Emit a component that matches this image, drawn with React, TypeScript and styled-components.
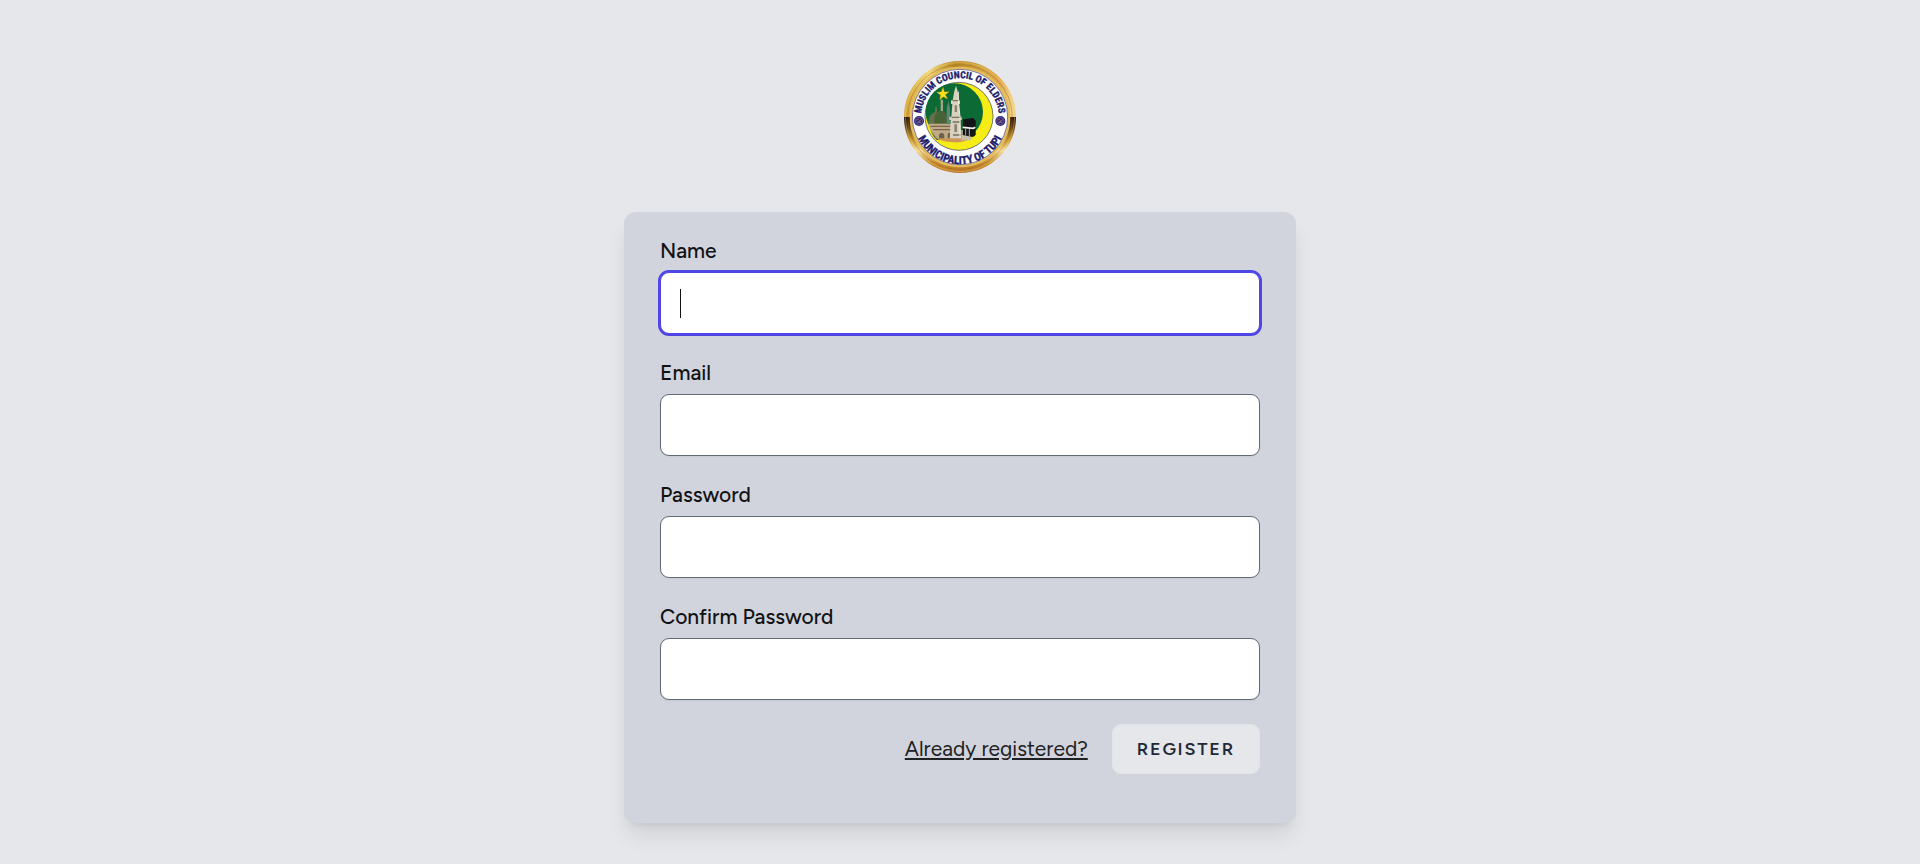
import React from "react";
import styled, { createGlobalStyle } from "styled-components";

const GlobalStyle = createGlobalStyle`
  *, *::before, *::after { box-sizing: border-box; }
  body {
    margin: 0;
    background: #e5e7eb;
    color: #111214;
    font-family: Figtree, Lato, "Liberation Sans", sans-serif;
    font-size: 21px;
    line-height: 30px;
  }
`;

const Page = styled.main`
  min-height: 100vh;
  display: flex;
  flex-direction: column;
  align-items: center;
  gap: 39px;
  padding: 61px 24px 40px;
`;

const HomeLink = styled.a`
  display: block;
  line-height: 0;
`;

const Seal = styled.svg`
  width: 112px;
  height: 112px;
`;

const Card = styled.form`
  width: 100%;
  max-width: 672px;
  display: flex;
  flex-direction: column;
  gap: 24px;
  padding: 24px 36px 49px;
  background: #d1d4dc;
  border-radius: 12px;
  box-shadow: 0 15px 22px -4px rgba(0, 0, 0, 0.1), 0 6px 9px -6px rgba(0, 0, 0, 0.1);
`;

const Field = styled.div`
  display: flex;
  flex-direction: column;
  gap: 6px;
`;

const Label = styled.label`
  align-self: flex-start;
  font-weight: 500;
`;

const Control = styled.div`
  position: relative;
  display: flex;
`;

const TextInput = styled.input`
  flex: 1;
  min-width: 0;
  height: 62px;
  padding: 0 18px;
  border: 1px solid #606a78;
  border-radius: 9px;
  background: #fff;
  color: inherit;
  font: inherit;
  box-shadow: 0 1px 2px rgba(0, 0, 0, 0.05);
  outline: none;

  &:focus {
    border-color: #4f46e5;
    box-shadow: 0 0 0 2px #4f46e5;
    caret-color: transparent;
  }
`;

const Caret = styled.span`
  position: absolute;
  left: 20px;
  top: 17px;
  width: 1px;
  height: 29px;
  background: #111;
  pointer-events: none;
`;

const Actions = styled.div`
  display: flex;
  align-items: center;
  justify-content: flex-end;
  gap: 24px;
`;

const LoginLink = styled.a`
  color: #1f2123;
  text-decoration: underline;
`;

const RegisterButton = styled.button`
  height: 50px;
  padding: 0 24px;
  border: 1px solid #e1e4e8;
  border-radius: 9px;
  background: #e5e7eb;
  color: #1f2937;
  font-family: inherit;
  font-size: 18px;
  font-weight: 600;
  letter-spacing: 0.1em;
  text-transform: uppercase;
  cursor: pointer;
`;

const fields = [
  { id: "name", label: "Name", type: "text", focused: true },
  { id: "email", label: "Email", type: "email" },
  { id: "password", label: "Password", type: "password" },
  { id: "password_confirmation", label: "Confirm Password", type: "password" },
];

function CouncilSeal() {
  return (
    <Seal viewBox="0 0 336 336" role="img" aria-label="Muslim Council of Elders seal">
      <defs>
        <linearGradient id="goldTop" x1="0" y1="0" x2="1" y2="0">
          <stop offset="0" stopColor="#d8a83c" />
          <stop offset="0.2" stopColor="#f3d878" />
          <stop offset="0.45" stopColor="#b98a26" />
          <stop offset="0.7" stopColor="#d2a544" />
          <stop offset="0.88" stopColor="#e5a94c" />
          <stop offset="1" stopColor="#f1d48a" />
        </linearGradient>
        <linearGradient id="goldBottom" gradientUnits="userSpaceOnUse" x1="0" y1="168" x2="0" y2="336">
          <stop offset="0" stopColor="#24100a" />
          <stop offset="0.16" stopColor="#5d3b17" />
          <stop offset="0.4" stopColor="#c9992f" />
          <stop offset="0.6" stopColor="#f5dfa0" />
          <stop offset="0.82" stopColor="#c98d2e" />
          <stop offset="1" stopColor="#b9732a" />
        </linearGradient>
        <path id="topArc" d="M56 202 A117 117 0 1 1 280 202" />
        <path id="bottomArc" d="M29 186 A140 140 0 0 0 307 186" />
      </defs>
      <path d="M10 168a158 158 0 0 1 316 0" fill="none" stroke="url(#goldTop)" strokeWidth="20" />
      <path d="M10 168a158 158 0 0 0 316 0" fill="none" stroke="url(#goldBottom)" strokeWidth="20" />
      <circle cx="168" cy="168" r="147" fill="#fff" stroke="#e3bd59" strokeWidth="8" />
      <circle cx="168" cy="168" r="157" fill="none" stroke="#8d651f" strokeWidth="2" opacity="0.6" />
      <circle cx="168" cy="168" r="164" fill="none" stroke="#f2d27c" strokeWidth="2" opacity="0.6" />
      <circle cx="168" cy="168" r="143" fill="none" stroke="#423789" strokeWidth="2" />
      <circle cx="165" cy="166" r="102" fill="#f7ed16" stroke="#34345f" strokeWidth="2" />
      <circle cx="151" cy="153" r="86" fill="#0c6a35" />
      {/* domed mosque on the left */}
      <path d="M73 182q2-22 20-29v-14h6v15q27 6 30 35v48H98q-16-12-25-55Z" fill="#63704a" />
      <path d="M91 174q0-19 20-26 22 8 23 28v12H91Z" fill="#476335" />
      <path d="M110 116h7v34h-7z" fill="#a2a48a" />
      <path d="M72 188h76v49h-42q-23-16-34-49Z" fill="#c1ab87" />
      <path d="M80 196h60M88 206h55" stroke="#74644c" strokeWidth="4" />
      <path d="M105 236v-15q8-12 16 0v15M131 236v-17q6-8 10 0v17" fill="#6b604d" />
      <path d="M128 190v-48l5-22 5 22v48z" fill="#608578" />
      {/* minaret */}
      <path d="M151 91l5-17 5 17 3 27h4v11h-4l3 38h6v10h-4l3 60h-35l3-60h-4v-10h6l3-38h-4v-11h5z" fill="#d9d1bf" />
      <path d="M146 119h20M143 169h28M146 183h24M147 222h26" stroke="#77715f" strokeWidth="4" />
      <path d="M152 133h7v20h-7zM151 190h8v23h-8z" fill="#8c8171" />
      <path d="M163 92v27l5 49v65" stroke="#f4ecdc" strokeWidth="3" fill="none" />
      {/* Kaaba and courtyard */}
      <path d="M97 232h106q-24 14-52 12-31 0-54-12Z" fill="#cf9558" />
      <path d="M172 207h42l-14 31h-28z" fill="#c6c0a9" />
      <path d="M177 175l31-4 7 8v43l-8 6-31-6Z" fill="#121417" />
      <path d="M176 199l32 3 6-3" stroke="#f1efe9" strokeWidth="5" fill="none" />
      <path d="M185 203v20M196 204v22" stroke="#a6a7a5" strokeWidth="3" />
      <path d="M117 79l4 14 14-1-11 9 7 13-13-7-11 9 3-14-12-8 14-1Z" fill="#ffdf16" stroke="#d3a51f" strokeWidth="1" />
      {[45, 289].map((cx) => (
        <g key={cx}>
          <circle cx={cx} cy="180" r="15" fill="#2a2674" />
          <circle cx={cx} cy="180" r="11" fill="none" stroke="#7769a5" strokeWidth="2" />
          <path d={`M${cx - 8} 178l6-3 4 4 6-3M${cx - 6} 184h12`} stroke="#b24c6b" strokeWidth="3" fill="none" />
          <path d={`M${cx - 4} 188l4-8 5 7`} stroke="#3d9390" strokeWidth="2" fill="none" />
        </g>
      ))}
      <g
        fill="#211b6b"
        stroke="#211b6b"
        strokeWidth="1"
        fontFamily="'Roboto Condensed', 'Barlow Condensed', Oswald, Lato, sans-serif"
        fontWeight="700"
        textAnchor="middle"
      >
        <text fontSize="29"><textPath href="#topArc" startOffset="50%">MUSLIM COUNCIL OF ELDERS</textPath></text>
        <text fontSize="33"><textPath href="#bottomArc" startOffset="50%">MUNICIPALITY OF TUPI</textPath></text>
      </g>
    </Seal>
  );
}

export default function App() {
  return (
    <>
      <GlobalStyle />
      <Page>
        <HomeLink href="/">
          <CouncilSeal />
        </HomeLink>
        <Card onSubmit={(event: React.FormEvent) => event.preventDefault()}>
          {fields.map(({ id, label, type, focused }) => (
            <Field key={id}>
              <Label htmlFor={id}>{label}</Label>
              <Control>
                <TextInput id={id} name={id} type={type} autoFocus={focused} />
                {focused && <Caret />}
              </Control>
            </Field>
          ))}
          <Actions>
            <LoginLink href="/login">Already registered?</LoginLink>
            <RegisterButton type="submit">Register</RegisterButton>
          </Actions>
        </Card>
      </Page>
    </>
  );
}
